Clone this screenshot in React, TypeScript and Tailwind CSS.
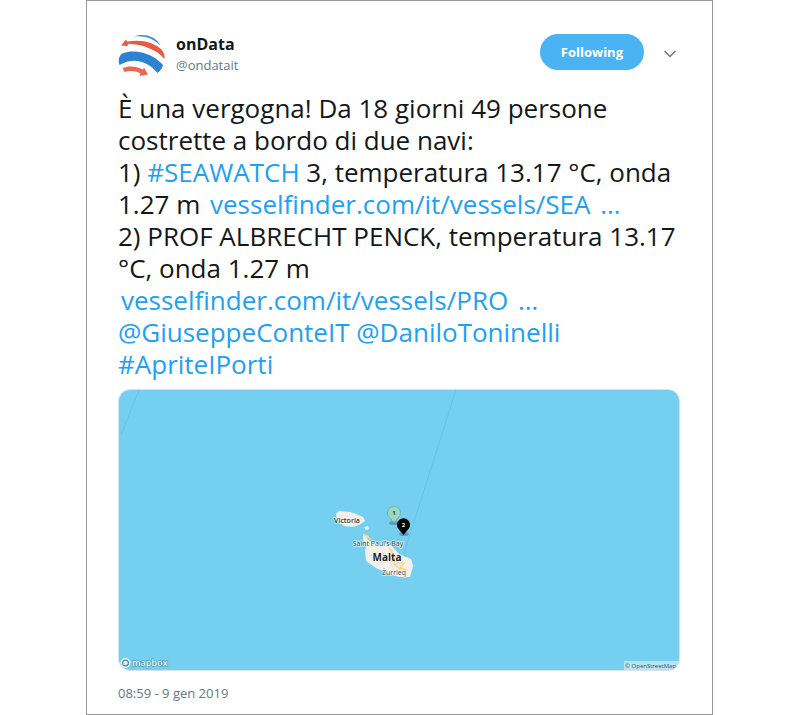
import type { ReactNode } from "react";

function TextLink({ children }: { children: ReactNode }) {
  return (
    <a href="#" className="text-[#1da1f2] hover:underline">
      {children}
    </a>
  );
}

function UrlLink({ children }: { children: ReactNode }) {
  return (
    <a href="#" className="pl-[3px] whitespace-nowrap text-[#1da1f2] hover:underline">
      {children}
      <span className="pl-[3px]">{"\u00a0"}…</span>
    </a>
  );
}

function Avatar() {
  return (
    <svg viewBox="0 0 48 48" className="size-12 shrink-0" role="img" aria-label="onData">
      <path d="M15 5.500C25 2 37 4 42.500 14.500C35 7 26 4 15 5.500Z" fill="#3f8fd0" />
      <path d="M3 14.500L8 8.500L9 10.500C23 8 36 11 44 19C46 22 47 25 46.500 28C39 19 25 13 9.500 13L10 15Z" fill="#ea5a40" />
      <path d="M1.500 34C0 29 1 25 4 22.500C18 17 36 23 45 34C44 38 42 40 39.500 42C31 31 16 25 1.500 34Z" fill="#2e83d0" />
      <path d="M4.500 37C10 34.500 18 35 25 38.500L26 36.500L30 43.500L21.500 45L22.500 42.500C17 39.500 11 39.500 6.500 41Z" fill="#ec6852" />
    </svg>
  );
}

function MapPicture() {
  return (
    <svg
      viewBox="0 0 560 280"
      className="block h-auto w-full"
      role="img"
      aria-label="Malta"
      fontFamily='"Open Sans", "Noto Sans", sans-serif'
    >
      <rect width="560" height="280" fill="#75cff0" />
      <path d="M20 0L2 45M337 0L286 160Q287 178 280 184" fill="none" stroke="#69c2e3" strokeWidth="1" />
      <path d="M217 124L220 121L231 122L237 124L244 127L246 131L240 135L233 137L225 136L218 131Z" fill="#f3f0eb" />
      <path d="M245 137L249 136L250 139L247 140ZM244 144L250 146L248 149L252 152L263 153L273 156L280 164L292 169L294 176L291 187L280 187L268 183L257 178L247 171L246 160L249 154L244 150Z" fill="#f3f0eb" />
      <path d="M245 144L251 149L249 153L254 156M270 158L276 166L275 174L282 180M278 173L285 173L281 178L288 180" fill="none" stroke="#f6d877" strokeWidth="1.500" />
      <path d="M250 166L263 162L272 171L284 177M260 174L270 170L275 180" fill="none" stroke="#e3ded8" strokeWidth="1" />
      <ellipse cx="275" cy="133" rx="5" ry="2" fill="#3b7184" opacity=".5" />
      <ellipse cx="285" cy="144" rx="5" ry="2" fill="#3b7184" opacity=".5" />
      <path d="M275 133Q273 130 270.500 127.500A6.500 6.500 0 1 1 279.500 127.500Q277 130 275 133Z" fill="#9bd8be" stroke="#6ca48f" strokeWidth=".7" />
      <path d="M284.500 145Q282 142 279.500 139A6.500 6.500 0 1 1 289.500 139Q287 142 284.500 145Z" fill="#000" />
      <g textAnchor="middle">
        <text x="275" y="125" fontSize="6" fontWeight="700" fill="#27483d">1</text>
        <text x="284.500" y="137" fontSize="6" fontWeight="700" fill="#fff">2</text>
        <g stroke="#fff" strokeOpacity=".6" strokeWidth="1.500" paintOrder="stroke">
          <text x="228" y="133" fontSize="7" fontWeight="600" fill="#333">Victoria</text>
          <text x="259" y="156" fontSize="7" fill="#444">Saint Paul’s Bay</text>
          <text x="268" y="171" fontSize="10" fontWeight="700" fill="#222">Malta</text>
          <text x="275" y="185" fontSize="7" fill="#444">Żurrieq</text>
        </g>
      </g>
      <circle cx="6.500" cy="273" r="5" fill="#eaf8fd" />
      <circle cx="6.500" cy="273" r="3.500" fill="#518ca2" />
      <path d="M4.500 275V272A2.200 2.200 0 1 1 7 275Z" fill="#eaf8fd" />
      <text x="13" y="276" fontSize="9" fontWeight="600" fill="#e0f5fc" stroke="#568fa3" strokeWidth="1.200" paintOrder="stroke">mapbox</text>
      <rect x="505" y="271" width="55" height="9" fill="#b7e3f3" />
      <text x="506" y="278" fontSize="6" fill="#3d5964">© OpenStreetMap</text>
    </svg>
  );
}

export default function App() {
  return (
    <main className="flex min-h-screen bg-white pr-[87px] pl-[86px] font-['Open_Sans','Noto_Sans',sans-serif]">
      <article className="w-full border border-[#999] pt-[30px] pr-8 pb-[10px] pl-[31px] text-[#14171a]">
        <header className="flex items-start justify-between">
          <a href="#" className="flex items-start gap-[10px]">
            <Avatar />
            <span className="flex flex-col pt-[3px]">
              <strong className="text-base leading-5 font-bold">onData</strong>
              <span className="text-[13px] leading-[22px] text-[#657786]">@ondatait</span>
            </span>
          </a>
          <div className="flex items-center gap-4 pt-[3px]">
            <button type="button" className="h-9 rounded-full bg-[#4ab3f4] px-[21px] text-[13px] leading-5 font-bold text-white">
              Following
            </button>
            <button type="button" aria-label="More" className="flex size-5 items-center justify-center text-[#657786]">
              <svg viewBox="0 0 12 8" className="mt-1 h-2 w-3" fill="none" stroke="currentColor" strokeWidth="1.500">
                <path d="M.5 1L6 6.500L11.500 1" />
              </svg>
            </button>
          </div>
        </header>

        <p className="mt-[13px] text-[26px] leading-8">
          È una vergogna! Da 18 giorni 49 persone costrette a bordo di due navi:
          <br />
          1) <TextLink>#SEAWATCH</TextLink> 3, temperatura 13.17 °C, onda 1.27 m{" "}
          <UrlLink>vesselfinder.com/it/vessels/SEA</UrlLink>
          <br />
          2) PROF ALBRECHT PENCK, temperatura 13.17 °C, onda 1.27 m
          <br />
          <UrlLink>vesselfinder.com/it/vessels/PRO</UrlLink>
          <br />
          <TextLink>@GiuseppeConteIT</TextLink> <TextLink>@DaniloToninelli</TextLink>
          <br />
          <TextLink>#ApriteIPorti</TextLink>
        </p>

        <div className="mt-[9px] overflow-hidden rounded-xl border border-[#d5e2e8]">
          <MapPicture />
        </div>
        <time dateTime="2019-01-09T08:59" className="mt-3 block text-[13px] leading-5 text-[#657786]">
          08:59 - 9 gen 2019
        </time>
      </article>
    </main>
  );
}
